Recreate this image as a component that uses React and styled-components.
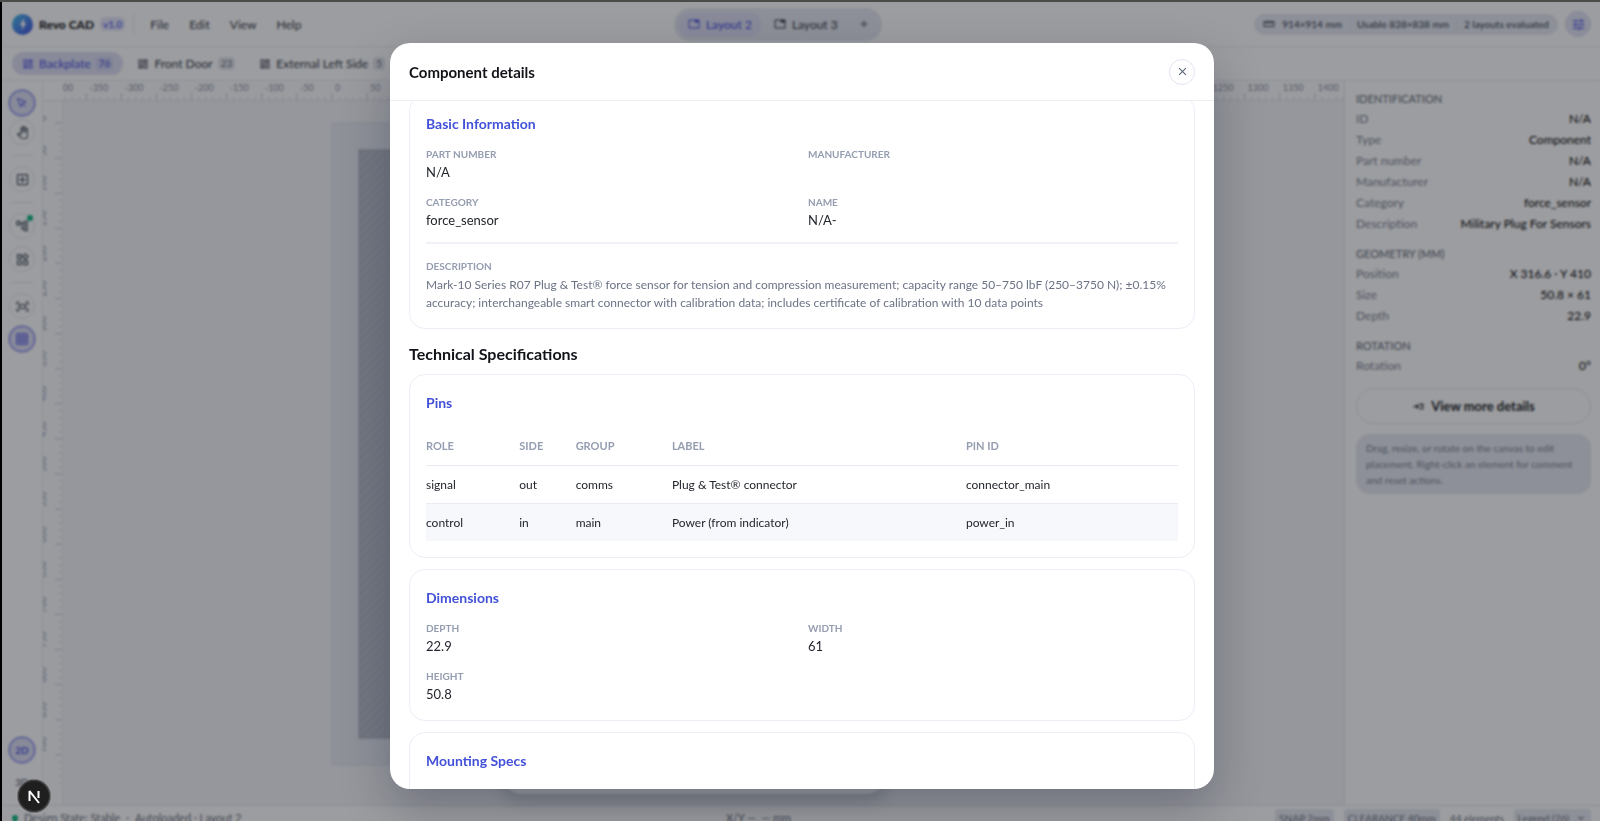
import React, { useEffect, useRef } from 'react'
import styled, { createGlobalStyle } from 'styled-components'
import {
  MdAdd,
  MdClose,
  MdExpandMore,
  MdGridOn,
  MdOutlineAccountTree,
  MdOutlineAddBox,
  MdOutlineBolt,
  MdOutlineDashboard,
  MdOutlineFitScreen,
  MdOutlinePanTool,
  MdOutlineTab,
  MdOutlineWidgets,
  MdReadMore,
  MdStraighten,
  MdTune,
} from 'react-icons/md'
import { LuMousePointer } from 'react-icons/lu'

const GlobalStyle = createGlobalStyle`
  * {
    box-sizing: border-box;
  }
  body {
    margin: 0;
    overflow: hidden;
    background: #000000;
    color: #1c1f26;
    font-family: Lato, 'Open Sans', sans-serif;
    font-size: 12px;
  }
  button {
    font: inherit;
    color: inherit;
    margin: 0;
    padding: 0;
    border: 0;
    background: none;
    cursor: pointer;
  }
  h2, h3, h4, p, dl, dd {
    margin: 0;
  }
`

const Frame = styled.div`
  height: calc(100vh + 8px);
  padding: 2px 0 0 2px;
  background: linear-gradient(#4b4b4a 2px, #000000 2px);
`

const Shell = styled.div`
  display: flex;
  flex-direction: column;
  height: 100%;
  background: #ffffff;
`

/* top bar */

const TopBar = styled.header`
  display: flex;
  flex: none;
  align-items: center;
  justify-content: space-between;
  height: 45px;
  padding: 0 9px 0 10px;
  border-bottom: 1px solid #e9ebf0;
`

const Cluster = styled.div`
  display: flex;
  align-items: center;
  gap: ${props => props.$gap || 6}px;
`

const Logo = styled.span`
  display: flex;
  align-items: center;
  justify-content: center;
  width: 21px;
  height: 21px;
  border-radius: 50%;
  color: #ffffff;
  background: linear-gradient(135deg, #45c0ee, #4a4fe0);
`

const Brand = styled.span`
  font-size: 12px;
  font-weight: 900;
`

const Version = styled.span`
  padding: 0 3px;
  border-radius: 5px;
  background: #e4e6f8;
  color: #6a6ff0;
  font-size: 10px;
  font-weight: 700;
  line-height: 14px;
`

const Divider = styled.span`
  width: 1px;
  height: 20px;
  margin: 0 10px 0 2px;
  background: #e2e5ec;
`

const Menu = styled.nav`
  display: flex;
  gap: 20px;
`

const MenuButton = styled.button`
  color: #353c48;
`

const LayoutSwitch = styled.div`
  display: flex;
  align-items: center;
  gap: 2px;
  padding: 4px;
  border-radius: 17px;
  background: #e6e9f1;
`

const Tab = styled.button`
  display: flex;
  align-items: center;
  gap: ${props => props.$small ? 5 : 6}px;
  height: ${props => props.$small ? 23 : 25}px;
  padding: 0 10px;
  border-radius: 13px;
  background: ${props => props.$active ? '#dddff4' : 'transparent'};
  color: ${props => props.$active ? '#5157e0' : '#353c48'};
  font-weight: ${props => props.$active ? 500 : 400};
`

const Count = styled.span`
  padding: 0 3px;
  border-radius: 4px;
  background: ${props => props.$active ? '#cdd1ee' : '#e5e8ee'};
  color: ${props => props.$active ? '#5157e0' : '#6b7280'};
  font-size: 10px;
  line-height: 13px;
`

const AddButton = styled.button`
  display: flex;
  align-items: center;
  justify-content: center;
  width: 28px;
  height: 24px;
  color: #4b5563;
`

const Facts = styled.div`
  display: flex;
  align-items: center;
  height: 21px;
  padding: 0 9px;
  border-radius: 11px;
  background: #e6e9f1;
  color: #434b5a;
  font-size: 10px;
  font-weight: 500;

  & > span {
    padding: 0 7px;
    border-left: 1px solid #dde1ea;
  }
  & > span:first-of-type {
    border-left: 0;
  }
  & > span:last-child {
    padding-right: 0;
  }
`

const RoundButton = styled.button`
  display: flex;
  align-items: center;
  justify-content: center;
  width: 26px;
  height: 26px;
  border: 1px solid #d9dcf3;
  border-radius: 50%;
  background: #e2e4f5;
  color: #5157e0;
`

const PanelTabs = styled.div`
  display: flex;
  flex: none;
  align-items: center;
  gap: 4px;
  height: 34px;
  padding: 0 10px;
  border-bottom: 1px solid #e9ebf0;
`

/* work area */

const Workspace = styled.div`
  display: flex;
  flex: 1;
  min-height: 0;
`

const ToolRail = styled.aside`
  display: flex;
  flex: none;
  flex-direction: column;
  align-items: center;
  gap: 10px;
  width: 41px;
  padding: 9px 0 10px;
  border-right: 1px solid #e9ebf0;
`

const ToolGroup = styled.div`
  display: flex;
  flex-direction: column;
  align-items: center;
  gap: ${props => props.$gap || 7}px;
`

const Tool = styled.button`
  position: relative;
  display: flex;
  align-items: center;
  justify-content: center;
  width: 26px;
  height: 26px;
  border: 1px solid ${props => props.$active ? '#7f85f0' : '#e4e7ee'};
  border-radius: 50%;
  background: ${props => props.$active ? '#dddff4' : '#ffffff'};
  box-shadow: ${props => props.$active ? '0 0 0 1px #c4c7f5' : 'none'};
  color: ${props => props.$active ? '#5157e0' : '#4b5563'};
  font-size: 10px;
  font-weight: 700;
`

const PlainTool = styled(Tool)`
  border-color: transparent;
  color: #6b7280;
`

const ToolDot = styled.i`
  position: absolute;
  top: 1px;
  right: 1px;
  width: 6px;
  height: 6px;
  border-radius: 50%;
  background: #10b981;
`

const Rule = styled.span`
  width: 21px;
  height: 1px;
  background: #e2e5ec;
`

const Spacer = styled.span`
  flex: 1;
`

const CanvasArea = styled.main`
  position: relative;
  display: grid;
  flex: 1;
  grid-template: 20px 1fr / 20px 1fr;
  min-width: 0;
  background: #f4f5f8;
`

const Corner = styled.div`
  border-bottom: 1px solid #e2e5ec;
  background: #ffffff;
`

const RulerSvg = styled.svg`
  display: block;
  width: 100%;
  height: 100%;
  background: #fcfcfd;
  color: #8d95a4;
  font-size: 9px;
`

const Board = styled.svg`
  display: block;
  width: 100%;
  height: 100%;
`

const FloatBar = styled.div`
  position: absolute;
  bottom: 11px;
  left: calc(50% - 192px);
  width: 384px;
  height: 40px;
  border-radius: 20px;
  background: #ffffff;
  box-shadow: 0 6px 18px rgba(15, 23, 42, 0.2);
`

const Inspector = styled.aside`
  flex: none;
  width: 256px;
  padding: 10px 9px 0 11px;
  border-left: 1px solid #e2e5ec;
`

const Group = styled.section`
  margin-bottom: 12px;
`

const GroupTitle = styled.h4`
  margin-bottom: 1px;
  color: #6b7280;
  font-size: 11px;
  font-weight: 500;
  line-height: 16px;
  text-transform: uppercase;
`

const Property = styled.div`
  display: flex;
  justify-content: space-between;
  line-height: 21px;

  dt {
    color: #7d8594;
  }
  dd {
    color: #000000;
  }
`

const DetailsButton = styled.button`
  display: flex;
  align-items: center;
  justify-content: center;
  gap: 6px;
  width: 100%;
  height: 36px;
  border: 1px solid #e2e5ec;
  border-radius: 18px;
  font-size: 13px;
  font-weight: 700;
`

const Hint = styled.p`
  margin-top: 10px;
  padding: 6px 10px;
  border-radius: 14px;
  background: #e6e9f1;
  color: #7d8595;
  font-size: 10px;
  line-height: 16px;
`

const StatusBar = styled.footer`
  display: flex;
  flex: none;
  align-items: center;
  justify-content: space-between;
  height: 24px;
  padding: 0 9px 0 10px;
  border-top: 1px solid #e2e5ec;
  color: #6b7280;
  font-size: 11px;
`

const StatusChips = styled(Cluster)`
  font-size: 10px;
`

const StateDot = styled.i`
  width: 6px;
  height: 6px;
  border-radius: 50%;
  background: #10b981;
`

const Chip = styled.span`
  display: flex;
  align-items: center;
  gap: 6px;
  padding: 0 4px;
  border-radius: 4px;
  background: #e6e9f1;
  line-height: 18px;
`

/* dialog */

const Overlay = styled.div`
  position: fixed;
  inset: 2px -2px -9px 2px;
  display: flex;
  align-items: center;
  justify-content: center;
  background: rgba(15, 17, 25, 0.41);
  backdrop-filter: blur(1px);
`

const Dialog = styled.section`
  display: flex;
  flex-direction: column;
  width: 824px;
  max-width: 90%;
  height: 90%;
  overflow: hidden;
  border-radius: 20px;
  background: #ffffff;
  box-shadow: 0 20px 48px rgba(15, 23, 42, 0.28);
`

const DialogHeader = styled.header`
  display: flex;
  flex: none;
  align-items: center;
  justify-content: space-between;
  height: 58px;
  padding: 0 19px;
  border-bottom: 1px solid #eceef3;
`

const DialogTitle = styled.h2`
  color: #111318;
  font-size: 15px;
  font-weight: 700;
`

const CloseButton = styled.button`
  display: flex;
  align-items: center;
  justify-content: center;
  width: 26px;
  height: 26px;
  border: 1px solid #e2e4f0;
  border-radius: 50%;
  color: #5b6478;
`

const DialogBody = styled.div`
  flex: 1;
  min-height: 0;
  padding: 18px 19px;
  overflow-y: auto;
  scrollbar-width: none;
`

const Card = styled.section`
  min-height: 120px;
  margin-bottom: 11px;
  padding: 16px;
  border: 1px solid #eceef6;
  border-radius: 16px;
`

const CardTitle = styled.h3`
  margin-bottom: 10px;
  color: #4351d8;
  font-size: 14px;
  font-weight: 700;
  line-height: 24px;
`

const SectionTitle = styled.h2`
  margin: 13px 0 8px;
  color: #111318;
  font-size: 16px;
  font-weight: 700;
  line-height: 24px;
`

const Fields = styled.dl`
  display: grid;
  grid-template-columns: 1fr 1fr;
  gap: 12px;
`

const Label = styled.dt`
  color: #959db0;
  font-size: 10px;
  font-weight: 700;
  line-height: 16px;
  text-transform: uppercase;
`

const Value = styled.dd`
  color: #23262d;
  font-size: 13px;
  line-height: 20px;
`

const Description = styled.dl`
  margin-top: 12px;
  padding-top: 14px;
  border-top: 2px solid #f1f2f7;

  dd {
    margin-top: 2px;
    color: #6b7385;
    font-size: 12px;
    line-height: 18px;
  }
`

const PinTable = styled.table`
  width: 100%;
  border-collapse: collapse;
  table-layout: fixed;
  text-align: left;

  th {
    height: 40px;
    padding: 0;
    border-bottom: 1px solid #e9ebf3;
    color: #959db0;
    font-size: 11px;
    font-weight: 700;
    text-transform: uppercase;
  }
  td {
    height: 38px;
    padding: 0;
    color: #23262d;
    font-size: 12px;
  }
  tbody tr:nth-child(even) {
    border-top: 1px solid #e9ebf3;
    background: #f6f8fc;
  }
`

const Col = styled.col`
  width: ${props => props.$width};
`

const DevBadge = styled.button`
  position: fixed;
  bottom: 9px;
  left: 18px;
  width: 32px;
  height: 32px;
  border-radius: 50%;
  background: #1f1f1f;
  box-shadow: inset 0 0 0 1px #454545, 0 0 0 1px #6f6f72;
`

const SCALE = 35.1
const PLATE = { x: 269, y: 22, size: 642 }

const basicInfo = [
  ['Part number', 'N/A'],
  ['Manufacturer', ''],
  ['Category', 'force_sensor'],
  ['Name', 'N/A-'],
]

const dimensions = [
  ['Depth', '22.9'],
  ['Width', '61'],
  ['Height', '50.8'],
]

const pinColumns = [
  ['Role', '12.4%'],
  ['Side', '7.5%'],
  ['Group', '12.8%'],
  ['Label', '39.1%'],
  ['Pin ID', '28.2%'],
]

const pins = [
  ['signal', 'out', 'comms', 'Plug & Test® connector', 'connector_main'],
  ['control', 'in', 'main', 'Power (from indicator)', 'power_in'],
]

const inspector = [
  {
    title: 'Identification',
    rows: [
      ['ID', 'N/A'],
      ['Type', 'Component'],
      ['Part number', 'N/A'],
      ['Manufacturer', 'N/A'],
      ['Category', 'force_sensor'],
      ['Description', 'Military Plug For Sensors'],
    ],
  },
  {
    title: 'Geometry (mm)',
    rows: [
      ['Position', 'X 316.6 · Y 410'],
      ['Size', '50.8 × 61'],
      ['Depth', '22.9'],
    ],
  },
  { title: 'Rotation', rows: [['Rotation', '0°']] },
]

const range = (from, to) => Array.from({ length: to - from + 1 }, (_, i) => from + i)

function TopRuler() {
  return (
    <RulerSvg>
      {range(-8, 28).map(n => {
        const x = PLATE.x + n * SCALE
        return (
          <g key={n}>
            <text x={x + 3} y='10' fill='currentColor'>{n * 50}</text>
            <path d={`M${x} 12v8`} stroke='#c6cbd6' />
            {[1, 2, 3, 4].map(i => (
              <path key={i} d={`M${x + (i * SCALE) / 5} 16v4`} stroke='#d5d9e2' />
            ))}
          </g>
        )
      })}
      <path d='M0 19.5h2000' stroke='#e2e5ec' />
    </RulerSvg>
  )
}

function SideRuler() {
  return (
    <RulerSvg>
      {range(0, 18).map(n => {
        const y = PLATE.y + n * SCALE
        return (
          <g key={n}>
            <text transform={`translate(3 ${y - 2}) rotate(-90)`} fill='currentColor'>{n * 50}</text>
            <path d={`M12 ${y}h8`} stroke='#c6cbd6' />
            {[1, 2, 3, 4].map(i => (
              <path key={i} d={`M16 ${y + (i * SCALE) / 5}h4`} stroke='#d5d9e2' />
            ))}
          </g>
        )
      })}
      <path d='M19.5 0v2000' stroke='#eceff4' />
    </RulerSvg>
  )
}

function Field({ label, value }) {
  return (
    <div>
      <Label>{label}</Label>
      <Value>{value}</Value>
    </div>
  )
}

function PanelTab({ name, count, active }) {
  return (
    <Tab $small $active={active}>
      <MdOutlineDashboard size={12} />
      {name}
      <Count $active={active}>{count}</Count>
    </Tab>
  )
}

function ComponentDialog() {
  const body = useRef(null)

  useEffect(() => {
    body.current.scrollTop = 24
  }, [])

  return (
    <Overlay>
      <Dialog role='dialog' aria-modal='true' aria-labelledby='dialog-title'>
        <DialogHeader>
          <DialogTitle id='dialog-title'>Component details</DialogTitle>
          <CloseButton aria-label='Close'><MdClose size={13} /></CloseButton>
        </DialogHeader>
        <DialogBody ref={body}>
          <Card>
            <CardTitle>Basic Information</CardTitle>
            <Fields>
              {basicInfo.map(([label, value]) => <Field key={label} label={label} value={value} />)}
            </Fields>
            <Description>
              <Label>Description</Label>
              <dd>
                Mark-10 Series R07 Plug &amp; Test® force sensor for tension and compression measurement; capacity range 50–750 lbF (250–3750 N); ±0.15% accuracy; interchangeable smart connector with calibration data; includes certificate of calibration with 10 data points
              </dd>
            </Description>
          </Card>
          <SectionTitle>Technical Specifications</SectionTitle>
          <Card>
            <CardTitle>Pins</CardTitle>
            <PinTable>
              <colgroup>
                {pinColumns.map(([name, width]) => <Col key={name} $width={width} />)}
              </colgroup>
              <thead>
                <tr>{pinColumns.map(([name]) => <th key={name}>{name}</th>)}</tr>
              </thead>
              <tbody>
                {pins.map(pin => (
                  <tr key={pin[0]}>{pin.map(cell => <td key={cell}>{cell}</td>)}</tr>
                ))}
              </tbody>
            </PinTable>
          </Card>
          <Card>
            <CardTitle>Dimensions</CardTitle>
            <Fields>
              {dimensions.map(([label, value]) => <Field key={label} label={label} value={value} />)}
            </Fields>
          </Card>
          <Card>
            <CardTitle>Mounting Specs</CardTitle>
          </Card>
        </DialogBody>
      </Dialog>
    </Overlay>
  )
}

export default function App() {
  return (
    <>
      <GlobalStyle />
      <Frame>
        <Shell>
          <TopBar>
            <Cluster>
              <Logo><MdOutlineBolt size={14} /></Logo>
              <Brand>Revo CAD</Brand>
              <Version>v1.0</Version>
              <Divider />
              <Menu>
                {['File', 'Edit', 'View', 'Help'].map(name => <MenuButton key={name}>{name}</MenuButton>)}
              </Menu>
            </Cluster>
            <LayoutSwitch>
              <Tab $active><MdOutlineTab size={12} />Layout 2</Tab>
              <Tab><MdOutlineTab size={12} />Layout 3</Tab>
              <AddButton aria-label='Add layout'><MdAdd size={12} /></AddButton>
            </LayoutSwitch>
            <Cluster $gap={7}>
              <Facts>
                <MdStraighten size={12} />
                <span>914×914 mm</span>
                <span>Usable 838×838 mm</span>
                <span>2 layouts evaluated</span>
              </Facts>
              <RoundButton aria-label='Settings'><MdTune size={15} /></RoundButton>
            </Cluster>
          </TopBar>
          <PanelTabs>
            <PanelTab name='Backplate' count='76' active />
            <PanelTab name='Front Door' count='23' />
            <PanelTab name='External Left Side' count='5' />
          </PanelTabs>
          <Workspace>
            <ToolRail>
              <ToolGroup $gap={3}>
                <Tool $active aria-label='Select'><LuMousePointer size={12} /></Tool>
                <Tool aria-label='Pan'><MdOutlinePanTool size={13} /></Tool>
              </ToolGroup>
              <Rule />
              <Tool aria-label='Add'><MdOutlineAddBox size={15} /></Tool>
              <Rule />
              <ToolGroup>
                <Tool aria-label='Connections'><MdOutlineAccountTree size={14} /><ToolDot /></Tool>
                <Tool aria-label='Components'><MdOutlineWidgets size={15} /></Tool>
              </ToolGroup>
              <Rule />
              <ToolGroup>
                <Tool aria-label='Fit to screen'><MdOutlineFitScreen size={15} /></Tool>
                <Tool $active aria-label='Grid'><MdGridOn size={14} /></Tool>
              </ToolGroup>
              <Spacer />
              <ToolGroup $gap={6}>
                <Tool $active>2D</Tool>
                <PlainTool>3D</PlainTool>
              </ToolGroup>
            </ToolRail>
            <CanvasArea>
              <Corner />
              <TopRuler />
              <SideRuler />
              <Board>
                <defs>
                  <pattern id='hatch' width='6' height='6' patternUnits='userSpaceOnUse' patternTransform='rotate(45)'>
                    <rect width='6' height='6' fill='#bbc1cd' />
                    <path d='M1 0v6' stroke='#b4bac7' strokeWidth='2' />
                  </pattern>
                </defs>
                <rect x={PLATE.x} y={PLATE.y} width={PLATE.size} height={PLATE.size} fill='#e7eaf2' stroke='#dee2ea' />
                <rect x={PLATE.x + 27} y={PLATE.y + 27} width='588' height='588' fill='url(#hatch)' stroke='#a4abb8' />
              </Board>
              <FloatBar />
            </CanvasArea>
            <Inspector>
              {inspector.map(group => (
                <Group key={group.title}>
                  <GroupTitle>{group.title}</GroupTitle>
                  <dl>
                    {group.rows.map(([name, value]) => (
                      <Property key={name}><dt>{name}</dt><dd>{value}</dd></Property>
                    ))}
                  </dl>
                </Group>
              ))}
              <DetailsButton><MdReadMore size={13} />View more details</DetailsButton>
              <Hint>Drag, resize, or rotate on the canvas to edit placement. Right-click an element for comment and reset actions.</Hint>
            </Inspector>
          </Workspace>
          <StatusBar>
            <Cluster>
              <StateDot />
              <span>Design State: Stable</span>
              <span>·</span>
              <span>Autoloaded · Layout 2</span>
            </Cluster>
            <span>X/Y —, — mm</span>
            <StatusChips $gap={10}>
              <Chip>SNAP 2mm</Chip>
              <Chip>CLEARANCE 40mm</Chip>
              <span>44 elements</span>
              <Chip>Legend (26)<MdExpandMore size={12} /></Chip>
            </StatusChips>
          </StatusBar>
        </Shell>
      </Frame>
      <ComponentDialog />
      <DevBadge aria-label='Open dev tools'>
        <svg width='32' height='32' viewBox='0 0 32 32' fill='none' stroke='#ffffff' strokeWidth='2'>
          <path d='M11.5 21V11l9.5 12' strokeLinejoin='bevel' />
          <path d='M20.5 11v7' />
        </svg>
      </DevBadge>
    </>
  )
}
